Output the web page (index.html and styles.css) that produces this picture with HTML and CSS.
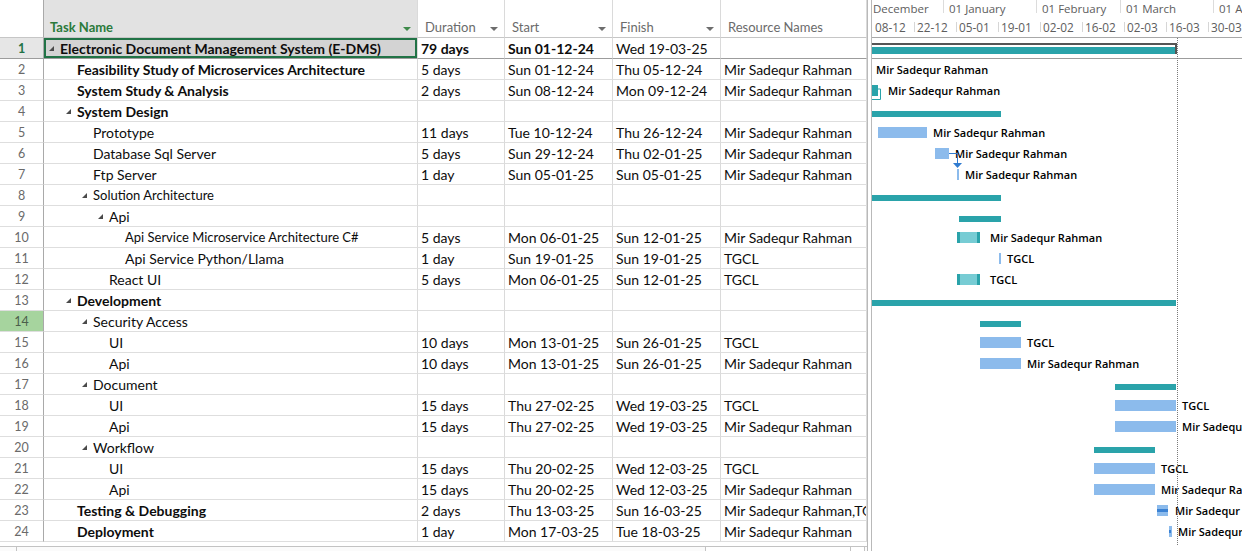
FILE: index.html
```html
<!DOCTYPE html>
<html>
<head>
<meta charset="utf-8">
<link rel="stylesheet" href="styles.css">
</head>
<body>
<div class="app">
  <div class="table">
    <div class="row hd">
      <div class="c num"></div>
      <div class="c task"><span>Task Name</span><span class="dd green"></span></div>
      <div class="c"><span>Duration</span><span class="dd"></span></div>
      <div class="c"><span>Start</span><span class="dd"></span></div>
      <div class="c"><span>Finish</span><span class="dd"></span></div>
      <div class="c"><span>Resource Names</span></div>
    </div>

    <div class="row r1"><div class="c num">1</div><div class="c task l0 b"><span class="tri"></span>Electronic Document Management System (E-DMS)</div><div class="c b">79 days</div><div class="c b">Sun 01-12-24</div><div class="c">Wed 19-03-25</div><div class="c"></div></div>
    <div class="row"><div class="c num">2</div><div class="c task l1 b"><span class="notri"></span>Feasibility Study of Microservices Architecture</div><div class="c">5 days</div><div class="c">Sun 01-12-24</div><div class="c">Thu 05-12-24</div><div class="c">Mir Sadequr Rahman</div></div>
    <div class="row"><div class="c num">3</div><div class="c task l1 b"><span class="notri"></span>System Study &amp; Analysis</div><div class="c">2 days</div><div class="c">Sun 08-12-24</div><div class="c">Mon 09-12-24</div><div class="c">Mir Sadequr Rahman</div></div>
    <div class="row"><div class="c num">4</div><div class="c task l1 b"><span class="tri"></span>System Design</div><div class="c"></div><div class="c"></div><div class="c"></div><div class="c"></div></div>
    <div class="row"><div class="c num">5</div><div class="c task l2"><span class="notri"></span>Prototype</div><div class="c">11 days</div><div class="c">Tue 10-12-24</div><div class="c">Thu 26-12-24</div><div class="c">Mir Sadequr Rahman</div></div>
    <div class="row"><div class="c num">6</div><div class="c task l2"><span class="notri"></span>Database Sql Server</div><div class="c">5 days</div><div class="c">Sun 29-12-24</div><div class="c">Thu 02-01-25</div><div class="c">Mir Sadequr Rahman</div></div>
    <div class="row"><div class="c num">7</div><div class="c task l2"><span class="notri"></span>Ftp Server</div><div class="c">1 day</div><div class="c">Sun 05-01-25</div><div class="c">Sun 05-01-25</div><div class="c">Mir Sadequr Rahman</div></div>
    <div class="row"><div class="c num">8</div><div class="c task l2 sm"><span class="tri"></span>Solution Architecture</div><div class="c"></div><div class="c"></div><div class="c"></div><div class="c"></div></div>
    <div class="row"><div class="c num">9</div><div class="c task l3"><span class="tri"></span>Api</div><div class="c"></div><div class="c"></div><div class="c"></div><div class="c"></div></div>
    <div class="row"><div class="c num">10</div><div class="c task l4 sm"><span class="notri"></span>Api Service Microservice Architecture C#</div><div class="c">5 days</div><div class="c">Mon 06-01-25</div><div class="c">Sun 12-01-25</div><div class="c">Mir Sadequr Rahman</div></div>
    <div class="row"><div class="c num">11</div><div class="c task l4"><span class="notri"></span>Api Service Python/Llama</div><div class="c">1 day</div><div class="c">Sun 19-01-25</div><div class="c">Sun 19-01-25</div><div class="c">TGCL</div></div>
    <div class="row"><div class="c num">12</div><div class="c task l3"><span class="notri"></span>React UI</div><div class="c">5 days</div><div class="c">Mon 06-01-25</div><div class="c">Sun 12-01-25</div><div class="c">TGCL</div></div>
    <div class="row"><div class="c num">13</div><div class="c task l1 b"><span class="tri"></span>Development</div><div class="c"></div><div class="c"></div><div class="c"></div><div class="c"></div></div>
    <div class="row"><div class="c num sel">14</div><div class="c task l2"><span class="tri"></span>Security Access</div><div class="c"></div><div class="c"></div><div class="c"></div><div class="c"></div></div>
    <div class="row"><div class="c num">15</div><div class="c task l3"><span class="notri"></span>UI</div><div class="c">10 days</div><div class="c">Mon 13-01-25</div><div class="c">Sun 26-01-25</div><div class="c">TGCL</div></div>
    <div class="row"><div class="c num">16</div><div class="c task l3"><span class="notri"></span>Api</div><div class="c">10 days</div><div class="c">Mon 13-01-25</div><div class="c">Sun 26-01-25</div><div class="c">Mir Sadequr Rahman</div></div>
    <div class="row"><div class="c num">17</div><div class="c task l2"><span class="tri"></span>Document</div><div class="c"></div><div class="c"></div><div class="c"></div><div class="c"></div></div>
    <div class="row"><div class="c num">18</div><div class="c task l3"><span class="notri"></span>UI</div><div class="c">15 days</div><div class="c">Thu 27-02-25</div><div class="c">Wed 19-03-25</div><div class="c">TGCL</div></div>
    <div class="row"><div class="c num">19</div><div class="c task l3"><span class="notri"></span>Api</div><div class="c">15 days</div><div class="c">Thu 27-02-25</div><div class="c">Wed 19-03-25</div><div class="c">Mir Sadequr Rahman</div></div>
    <div class="row"><div class="c num">20</div><div class="c task l2"><span class="tri"></span>Workflow</div><div class="c"></div><div class="c"></div><div class="c"></div><div class="c"></div></div>
    <div class="row"><div class="c num">21</div><div class="c task l3"><span class="notri"></span>UI</div><div class="c">15 days</div><div class="c">Thu 20-02-25</div><div class="c">Wed 12-03-25</div><div class="c">TGCL</div></div>
    <div class="row"><div class="c num">22</div><div class="c task l3"><span class="notri"></span>Api</div><div class="c">15 days</div><div class="c">Thu 20-02-25</div><div class="c">Wed 12-03-25</div><div class="c">Mir Sadequr Rahman</div></div>
    <div class="row"><div class="c num">23</div><div class="c task l1 b"><span class="notri"></span>Testing &amp; Debugging</div><div class="c">2 days</div><div class="c">Thu 13-03-25</div><div class="c">Sun 16-03-25</div><div class="c">Mir Sadequr Rahman,TGCL</div></div>
    <div class="row"><div class="c num">24</div><div class="c task l1 b"><span class="notri"></span>Deployment</div><div class="c">1 day</div><div class="c">Mon 17-03-25</div><div class="c">Tue 18-03-25</div><div class="c">Mir Sadequr Rahman</div></div>

    <div class="hscroll">
      <div class="sbtn"></div>
      <div class="strack"></div>
      <div class="sthumb"></div>
      <div class="sbtn right"></div>
    </div>
  </div>

  <div class="split"></div>

  <div class="gantt">
    <div class="tscale">
      <div class="tier months">
        <div class="mcell first" style="width:71px">December</div>
        <div class="mcell" style="width:93px">01 January</div>
        <div class="mcell" style="width:84px">01 February</div>
        <div class="mcell" style="width:93px">01 March</div>
        <div class="mcell" style="width:90px">01 April</div>
      </div>
      <div class="tier weeks">
        <div class="wcell first"><span class="wt">08-12</span></div>
        <div class="wcell"><span class="tick"></span><span class="wt">22-12</span></div>
        <div class="wcell"><span class="tick"></span><span class="wt">05-01</span></div>
        <div class="wcell"><span class="tick"></span><span class="wt">19-01</span></div>
        <div class="wcell"><span class="tick"></span><span class="wt">02-02</span></div>
        <div class="wcell"><span class="tick"></span><span class="wt">16-02</span></div>
        <div class="wcell"><span class="tick"></span><span class="wt">02-03</span></div>
        <div class="wcell"><span class="tick"></span><span class="wt">16-03</span></div>
        <div class="wcell"><span class="tick"></span><span class="wt">30-03</span></div>
      </div>
    </div>
    <div class="chart">
      <div class="grow r1"><div class="proj" style="left:0;width:305px"><div class="projfill"></div></div></div>
      <div class="grow"><span class="lbl" style="left:4px">Mir Sadequr Rahman</span></div>
      <div class="grow"><div class="tbar" style="left:0;width:6px"></div><span class="lbl" style="left:16px">Mir Sadequr Rahman</span></div>
      <div class="grow"><div class="sum" style="left:0;width:129px"></div></div>
      <div class="grow"><div class="bar" style="left:6px;width:49px"></div><span class="lbl" style="left:61px">Mir Sadequr Rahman</span></div>
      <div class="grow"><div class="bar" style="left:63px;width:14px"></div><span class="lbl" style="left:83px">Mir Sadequr Rahman</span></div>
      <div class="grow"><div class="bar" style="left:85px;width:2px"></div><span class="lbl" style="left:93px">Mir Sadequr Rahman</span></div>
      <div class="grow"><div class="sum" style="left:0;width:129px"></div></div>
      <div class="grow"><div class="sum" style="left:87px;width:42px"></div></div>
      <div class="grow"><div class="tbar" style="left:85px;width:23px"></div><span class="lbl" style="left:118px">Mir Sadequr Rahman</span></div>
      <div class="grow"><div class="bar" style="left:127px;width:2px"></div><span class="lbl" style="left:135px">TGCL</span></div>
      <div class="grow"><div class="tbar" style="left:85px;width:23px"></div><span class="lbl" style="left:118px">TGCL</span></div>
      <div class="grow"><div class="sum" style="left:0;width:304px"></div></div>
      <div class="grow"><div class="sum" style="left:108px;width:41px"></div></div>
      <div class="grow"><div class="bar" style="left:108px;width:41px"></div><span class="lbl" style="left:155px">TGCL</span></div>
      <div class="grow"><div class="bar" style="left:108px;width:41px"></div><span class="lbl" style="left:155px">Mir Sadequr Rahman</span></div>
      <div class="grow"><div class="sum" style="left:243px;width:61px"></div></div>
      <div class="grow"><div class="bar" style="left:243px;width:61px"></div><span class="lbl" style="left:310px">TGCL</span></div>
      <div class="grow"><div class="bar" style="left:243px;width:61px"></div><span class="lbl" style="left:310px">Mir Sadequr Rahman</span></div>
      <div class="grow"><div class="sum" style="left:222px;width:61px"></div></div>
      <div class="grow"><div class="bar" style="left:222px;width:61px"></div><span class="lbl" style="left:289px">TGCL</span></div>
      <div class="grow"><div class="bar" style="left:222px;width:61px"></div><span class="lbl" style="left:289px">Mir Sadequr Rahman</span></div>
      <div class="grow"><div class="bar" style="left:285px;width:11px"><div class="prog"></div></div><span class="lbl" style="left:303px">Mir Sadequr Rahman,TGCL</span></div>
      <div class="grow"><div class="bar" style="left:297px;width:3px"><div class="prog dot"></div></div><span class="lbl" style="left:306px">Mir Sadequr Rahman</span></div>

      <div class="finish" style="left:305px"></div>
      <svg class="links" width="370" height="513" viewBox="0 0 370 513">
        <path d="M6 51 H8.5 V61.5 H0" fill="none" stroke="#2aa3aa" stroke-width="1"/>
        <path d="M77 115.5 H85.5 V125" fill="none" stroke="#2f7bd0" stroke-width="1"/>
        <polygon points="81,125 90,125 85.5,130" fill="#2f7bd0"/>
      </svg>
    </div>
  </div>
</div>
</body>
</html>
```

FILE: styles.css
```css
html, body {
  margin: 0;
  padding: 0;
}
body {
  width: 1242px;
  height: 551px;
  overflow: hidden;
  background: #ffffff;
  font-family: Lato, "Open Sans", sans-serif;
  color: #111;
}
.app {
  display: flex;
  height: 551px;
}
.table {
  width: 867px;
  flex: none;
  display: flex;
  flex-direction: column;
}
.split {
  width: 5px;
  flex: none;
  box-sizing: border-box;
  border-left: 1px solid #b9b9b9;
  border-right: 1px solid #b9b9b9;
}
.gantt {
  width: 370px;
  flex: none;
  overflow: hidden;
  display: flex;
  flex-direction: column;
}

/* table */
.row {
  display: grid;
  grid-template-columns: 44px 374px 87px 108px 108px 146px;
  height: 21px;
  flex: none;
}
.c {
  box-sizing: border-box;
  border-right: 1px solid #dadada;
  border-bottom: 1px solid #dedede;
  display: flex;
  align-items: center;
  padding-left: 3px;
  padding-top: 1px;
  overflow: hidden;
  white-space: nowrap;
  font-size: 14px;
  color: #0d0d0d;
}
.c.b { font-weight: 700; }
.c.sm { font-size: 13px; padding-top: 0; }
.c.num {
  justify-content: center;
  padding: 0;
  color: #6a6a6a;
  font-size: 12.5px;
  border-right-color: #a9a9a9;
}
.c.num.sel { background: #a6d49e; color: #4b5e4b; }

.row.hd { height: 38px; }
.hd .c {
  align-items: flex-end;
  justify-content: space-between;
  padding: 0 6px 2px 7px;
  font-size: 13px;
  color: #6b6b6b;
  border-bottom-color: #c6c6c6;
}
.hd .c.num { border-bottom-color: #c6c6c6; }
.hd .c.task {
  background: #e2e2e2;
  color: #2b7a3b;
  font-weight: 700;
  padding-left: 6px;
}
.dd {
  width: 0;
  height: 0;
  border-left: 4px solid transparent;
  border-right: 4px solid transparent;
  border-top: 4px solid #6d6d6d;
  margin-bottom: 4px;
}
.dd.green { border-top-color: #3e8a4a; }

.task { padding-left: 0; }
.l0 { padding-left: 5px; }
.l1 { padding-left: 22px; }
.l2 { padding-left: 38px; }
.l3 { padding-left: 54px; }
.l4 { padding-left: 70px; }
.tri {
  flex: none;
  width: 0;
  height: 0;
  border-left: 5px solid transparent;
  border-bottom: 5px solid #4a4a4a;
  margin-right: 6px;
}
.notri {
  flex: none;
  width: 11px;
}

.r1 .c { border-bottom-color: #9c9c9c; }
.r1 .c.num { background: #e6e6e6; color: #217346; font-weight: 700; }
.r1 .c.task {
  background: #d3d3d3;
  box-shadow: inset 0 0 0 2px #217346;
}

.hscroll {
  flex: 1;
  display: flex;
  margin-top: 4px;
  border-top: 1px solid #c3c3c3;
  background: #fbfbfb;
}
.sbtn {
  width: 17px;
  box-sizing: border-box;
  border-right: 1px solid #c3c3c3;
}
.strack { width: 688px; }
.sthumb {
  width: 145px;
  box-sizing: border-box;
  border-left: 1px solid #c3c3c3;
  background: #ffffff;
}
.sbtn.right {
  width: 15px;
  border-left: 1px solid #c3c3c3;
  border-right: 1px solid #c3c3c3;
  background: #fff;
}

/* timescale */
.tscale {
  height: 38px;
  flex: none;
  box-sizing: border-box;
  border-bottom: 1px solid #a8a8a8;
  font-family: "Open Sans", sans-serif;
  color: #5d5d5d;
}
.tier { display: flex; }
.months { height: 17px; }
.mcell {
  flex: none;
  box-sizing: border-box;
  height: 13px;
  border-left: 1px solid #dcdcdc;
  padding-left: 5px;
  font-size: 11.5px;
  line-height: 17px;
  white-space: nowrap;
  overflow: visible;
}
.mcell.first { border-left: none; padding-left: 1px; }
.weeks { height: 20px; }
.wcell {
  flex: none;
  width: 42px;
  display: flex;
  align-items: center;
  font-size: 11.8px;
  white-space: nowrap;
}
.wcell.first { padding-left: 3px; box-sizing: border-box; }
.tick {
  flex: none;
  width: 1px;
  height: 10px;
  background: #d6d6d6;
  margin-right: 2px;
}

/* chart */
.chart {
  position: relative;
  flex: 1;
}
.grow {
  position: relative;
  height: 21px;
  box-sizing: border-box;
}
.grow.r1 { border-bottom: 1px solid #9c9c9c; }
.bar {
  position: absolute;
  top: 5px;
  height: 11px;
  background: #8cbbec;
}
.tbar {
  position: absolute;
  top: 5px;
  height: 11px;
  box-sizing: border-box;
  background: #77ccd4;
  border-left: 3px solid #2aa3aa;
  border-right: 3px solid #2aa3aa;
}
.sum {
  position: absolute;
  top: 10px;
  height: 6px;
  background: #2aa3aa;
}
.proj {
  position: absolute;
  top: 5px;
  height: 11px;
  box-sizing: border-box;
  border-top: 2px solid #555555;
  border-right: 2px solid #555555;
  padding-top: 2px;
}
.projfill {
  height: 7px;
  background: #2aa3aa;
}
.prog {
  height: 3px;
  margin-top: 4px;
  background: #3b82d4;
}
.prog.dot { margin-left: 0; width: 2px; }
.lbl {
  position: absolute;
  top: 0;
  line-height: 21px;
  font-family: "Open Sans", sans-serif;
  font-weight: 600;
  font-size: 11px;
  color: #000;
  white-space: nowrap;
}
.finish {
  position: absolute;
  top: 0;
  bottom: 6px;
  width: 0;
  border-left: 1px dotted #7a7a7a;
}
.links {
  position: absolute;
  left: 0;
  top: 0;
  pointer-events: none;
}
```
